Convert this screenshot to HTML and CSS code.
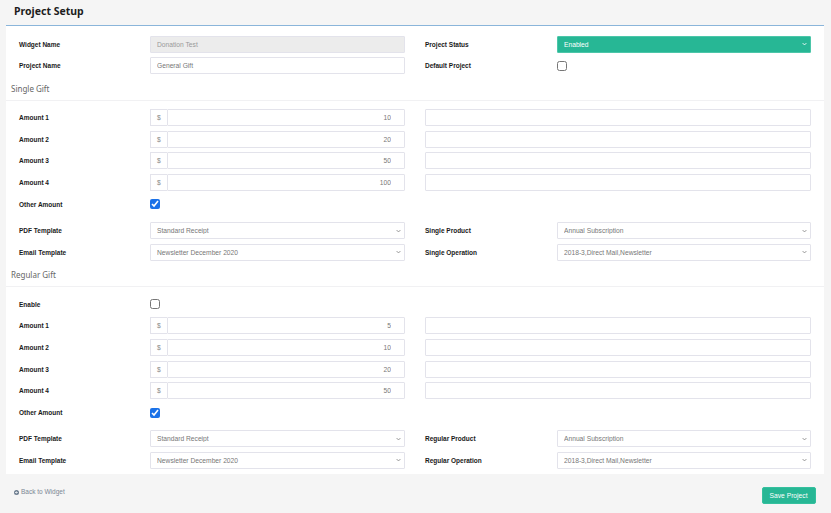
FILE: index.html
```html
<!DOCTYPE html>
<html lang="en">
<head>
  <meta charset="UTF-8" />
  <title>Project Setup</title>
  <link rel="stylesheet" href="styles.css">
</head>
<body>
  <header class="page-head">
    <h1>Project Setup</h1>
  </header>

  <main class="panel">
    <div class="block first">
      <div class="row">
        <div class="half">
          <label class="label">Widget Name</label>
          <input class="field readonly" type="text" value="Donation Test" readonly />
        </div>
        <div class="half">
          <label class="label">Project Status</label>
          <div class="select-wrap">
            <select class="field select green"><option>Enabled</option></select>
            <svg class="chev" viewBox="0 0 8 5" width="5" height="4"><path d="M1 1l3 3 3-3" fill="none" stroke="#fff" stroke-width="1.4"/></svg>
          </div>
        </div>
      </div>
      <div class="row">
        <div class="half">
          <label class="label">Project Name</label>
          <input class="field" type="text" value="General Gift" />
        </div>
        <div class="half">
          <label class="label">Default Project</label>
          <input class="check" type="checkbox" />
        </div>
      </div>
    </div>

    <div class="section-title">Single Gift</div>
    <div class="block">
      <div class="row">
        <div class="half">
          <label class="label">Amount 1</label>
          <div class="input-group"><span class="addon">$</span><input class="field amount" type="text" value="10" /></div>
        </div>
        <div class="half"><input class="field" type="text" /></div>
      </div>
      <div class="row">
        <div class="half">
          <label class="label">Amount 2</label>
          <div class="input-group"><span class="addon">$</span><input class="field amount" type="text" value="20" /></div>
        </div>
        <div class="half"><input class="field" type="text" /></div>
      </div>
      <div class="row">
        <div class="half">
          <label class="label">Amount 3</label>
          <div class="input-group"><span class="addon">$</span><input class="field amount" type="text" value="50" /></div>
        </div>
        <div class="half"><input class="field" type="text" /></div>
      </div>
      <div class="row">
        <div class="half">
          <label class="label">Amount 4</label>
          <div class="input-group"><span class="addon">$</span><input class="field amount" type="text" value="100" /></div>
        </div>
        <div class="half"><input class="field" type="text" /></div>
      </div>
      <div class="row spaced">
        <div class="half">
          <label class="label">Other Amount</label>
          <input class="check" type="checkbox" checked />
        </div>
      </div>
      <div class="row">
        <div class="half">
          <label class="label">PDF Template</label>
          <div class="select-wrap">
            <select class="field select"><option>Standard Receipt</option></select>
            <svg class="chev" viewBox="0 0 8 5" width="5" height="4"><path d="M1 1l3 3 3-3" fill="none" stroke="#888" stroke-width="1.4"/></svg>
          </div>
        </div>
        <div class="half">
          <label class="label">Single Product</label>
          <div class="select-wrap">
            <select class="field select"><option>Annual Subscription</option></select>
            <svg class="chev" viewBox="0 0 8 5" width="5" height="4"><path d="M1 1l3 3 3-3" fill="none" stroke="#888" stroke-width="1.4"/></svg>
          </div>
        </div>
      </div>
      <div class="row">
        <div class="half">
          <label class="label">Email Template</label>
          <div class="select-wrap">
            <select class="field select"><option>Newsletter December 2020</option></select>
            <svg class="chev" viewBox="0 0 8 5" width="5" height="4"><path d="M1 1l3 3 3-3" fill="none" stroke="#888" stroke-width="1.4"/></svg>
          </div>
        </div>
        <div class="half">
          <label class="label">Single Operation</label>
          <div class="select-wrap">
            <select class="field select"><option>2018-3,Direct Mail,Newsletter</option></select>
            <svg class="chev" viewBox="0 0 8 5" width="5" height="4"><path d="M1 1l3 3 3-3" fill="none" stroke="#888" stroke-width="1.4"/></svg>
          </div>
        </div>
      </div>
    </div>

    <div class="section-title">Regular Gift</div>
    <div class="block">
      <div class="row">
        <div class="half">
          <label class="label">Enable</label>
          <input class="check" type="checkbox" />
        </div>
      </div>
      <div class="row">
        <div class="half">
          <label class="label">Amount 1</label>
          <div class="input-group"><span class="addon">$</span><input class="field amount" type="text" value="5" /></div>
        </div>
        <div class="half"><input class="field" type="text" /></div>
      </div>
      <div class="row">
        <div class="half">
          <label class="label">Amount 2</label>
          <div class="input-group"><span class="addon">$</span><input class="field amount" type="text" value="10" /></div>
        </div>
        <div class="half"><input class="field" type="text" /></div>
      </div>
      <div class="row">
        <div class="half">
          <label class="label">Amount 3</label>
          <div class="input-group"><span class="addon">$</span><input class="field amount" type="text" value="20" /></div>
        </div>
        <div class="half"><input class="field" type="text" /></div>
      </div>
      <div class="row">
        <div class="half">
          <label class="label">Amount 4</label>
          <div class="input-group"><span class="addon">$</span><input class="field amount" type="text" value="50" /></div>
        </div>
        <div class="half"><input class="field" type="text" /></div>
      </div>
      <div class="row spaced">
        <div class="half">
          <label class="label">Other Amount</label>
          <input class="check" type="checkbox" checked />
        </div>
      </div>
      <div class="row">
        <div class="half">
          <label class="label">PDF Template</label>
          <div class="select-wrap">
            <select class="field select"><option>Standard Receipt</option></select>
            <svg class="chev" viewBox="0 0 8 5" width="5" height="4"><path d="M1 1l3 3 3-3" fill="none" stroke="#888" stroke-width="1.4"/></svg>
          </div>
        </div>
        <div class="half">
          <label class="label">Regular Product</label>
          <div class="select-wrap">
            <select class="field select"><option>Annual Subscription</option></select>
            <svg class="chev" viewBox="0 0 8 5" width="5" height="4"><path d="M1 1l3 3 3-3" fill="none" stroke="#888" stroke-width="1.4"/></svg>
          </div>
        </div>
      </div>
      <div class="row">
        <div class="half">
          <label class="label">Email Template</label>
          <div class="select-wrap">
            <select class="field select"><option>Newsletter December 2020</option></select>
            <svg class="chev" viewBox="0 0 8 5" width="5" height="4"><path d="M1 1l3 3 3-3" fill="none" stroke="#888" stroke-width="1.4"/></svg>
          </div>
        </div>
        <div class="half">
          <label class="label">Regular Operation</label>
          <div class="select-wrap">
            <select class="field select"><option>2018-3,Direct Mail,Newsletter</option></select>
            <svg class="chev" viewBox="0 0 8 5" width="5" height="4"><path d="M1 1l3 3 3-3" fill="none" stroke="#888" stroke-width="1.4"/></svg>
          </div>
        </div>
      </div>
    </div>
  </main>

  <footer class="page-foot">
    <a class="back" href="#">
      <svg viewBox="0 0 10 10" width="5" height="5"><circle cx="5" cy="5" r="5" fill="#6b7c8e"/><path d="M7.5 5H3M5 2.8L2.8 5 5 7.2" fill="none" stroke="#fff" stroke-width="1.6"/></svg>
      Back to Widget
    </a>
    <button class="save">Save Project</button>
  </footer>
</body>
</html>
```

FILE: styles.css
```css
body {
  margin: 0;
  background-color: #f5f5f5;
  font-family: "Liberation Sans", Arial, sans-serif;
  color: #222;
}

.page-head {
  height: 25px;
  padding: 4px 14px 0;
  box-sizing: border-box;
}

.page-head h1 {
  margin: 0;
  font-family: "Noto Sans", sans-serif;
  font-size: 10.5px;
  line-height: 14px;
  font-weight: 700;
  color: #1d1d1d;
}

.panel {
  margin: 0 7px 0 6px;
  background: #fff;
  border-top: 1px solid #8ab5da;
  padding-bottom: 5.5px;
}

.block {
  padding: 8.5px 13px 0;
}

.block.first {
  padding-top: 9.5px;
}

.section-title {
  font-family: "Noto Sans", sans-serif;
  font-size: 8px;
  line-height: 12px;
  color: #666;
  padding: 8.5px 5px 5px;
  border-bottom: 1px solid #f1f1f3;
}

.row {
  display: flex;
  gap: 20px;
  height: 17px;
  margin-bottom: 4.67px;
}

.row:last-child {
  margin-bottom: 0;
}

.row.spaced {
  margin-bottom: 9.3px;
}

.half {
  flex: 0 0 386px;
  display: flex;
  align-items: center;
}

.half + .half {
  flex: 1;
}

.label {
  flex: 0 0 131px;
  font-size: 6.5px;
  font-weight: 700;
  color: #1a1a1a;
}

.half + .half .label {
  flex-basis: 132px;
}

.field {
  flex: 1;
  width: 100%;
  height: 17px;
  box-sizing: border-box;
  margin: 0;
  padding: 0 6px;
  border: 1px solid #e3e3eb;
  border-radius: 1px;
  background: #fff;
  font-family: "Liberation Sans", Arial, sans-serif;
  font-size: 6.7px;
  color: #777;
  outline: none;
}

.field.readonly {
  background: #ececec;
  color: #999;
}

.input-group {
  flex: 1;
  display: flex;
  height: 17px;
}

.addon {
  flex: 0 0 16.5px;
  box-sizing: border-box;
  border: 1px solid #e3e3eb;
  border-right: none;
  display: flex;
  align-items: center;
  justify-content: center;
  font-size: 6.7px;
  color: #888;
}

.field.amount {
  text-align: right;
  padding-right: 13px;
}

.select-wrap {
  flex: 1;
  position: relative;
  height: 17px;
}

.select {
  appearance: none;
  -webkit-appearance: none;
  display: block;
}

.select.green {
  background: #27b795;
  border-color: #4cc6a9;
  color: #fff;
}

.chev {
  position: absolute;
  right: 4px;
  top: 6.5px;
}

.check {
  width: 10px;
  height: 10px;
  margin: 0;
  accent-color: #1b72e8;
}

.page-foot {
  display: flex;
  justify-content: space-between;
  align-items: flex-start;
  padding: 13px 15.5px 0 14px;
}

.back {
  display: flex;
  align-items: center;
  gap: 2px;
  margin-top: 1px;
  font-size: 6.5px;
  line-height: 8px;
  color: #7b8794;
  text-decoration: none;
}

.save {
  height: 16.5px;
  padding: 0 7px;
  background: #27b795;
  border: 1px solid #35c09e;
  border-radius: 2px;
  color: #fff;
  font-family: "Liberation Sans", Arial, sans-serif;
  font-size: 6.7px;
  cursor: pointer;
}
```
